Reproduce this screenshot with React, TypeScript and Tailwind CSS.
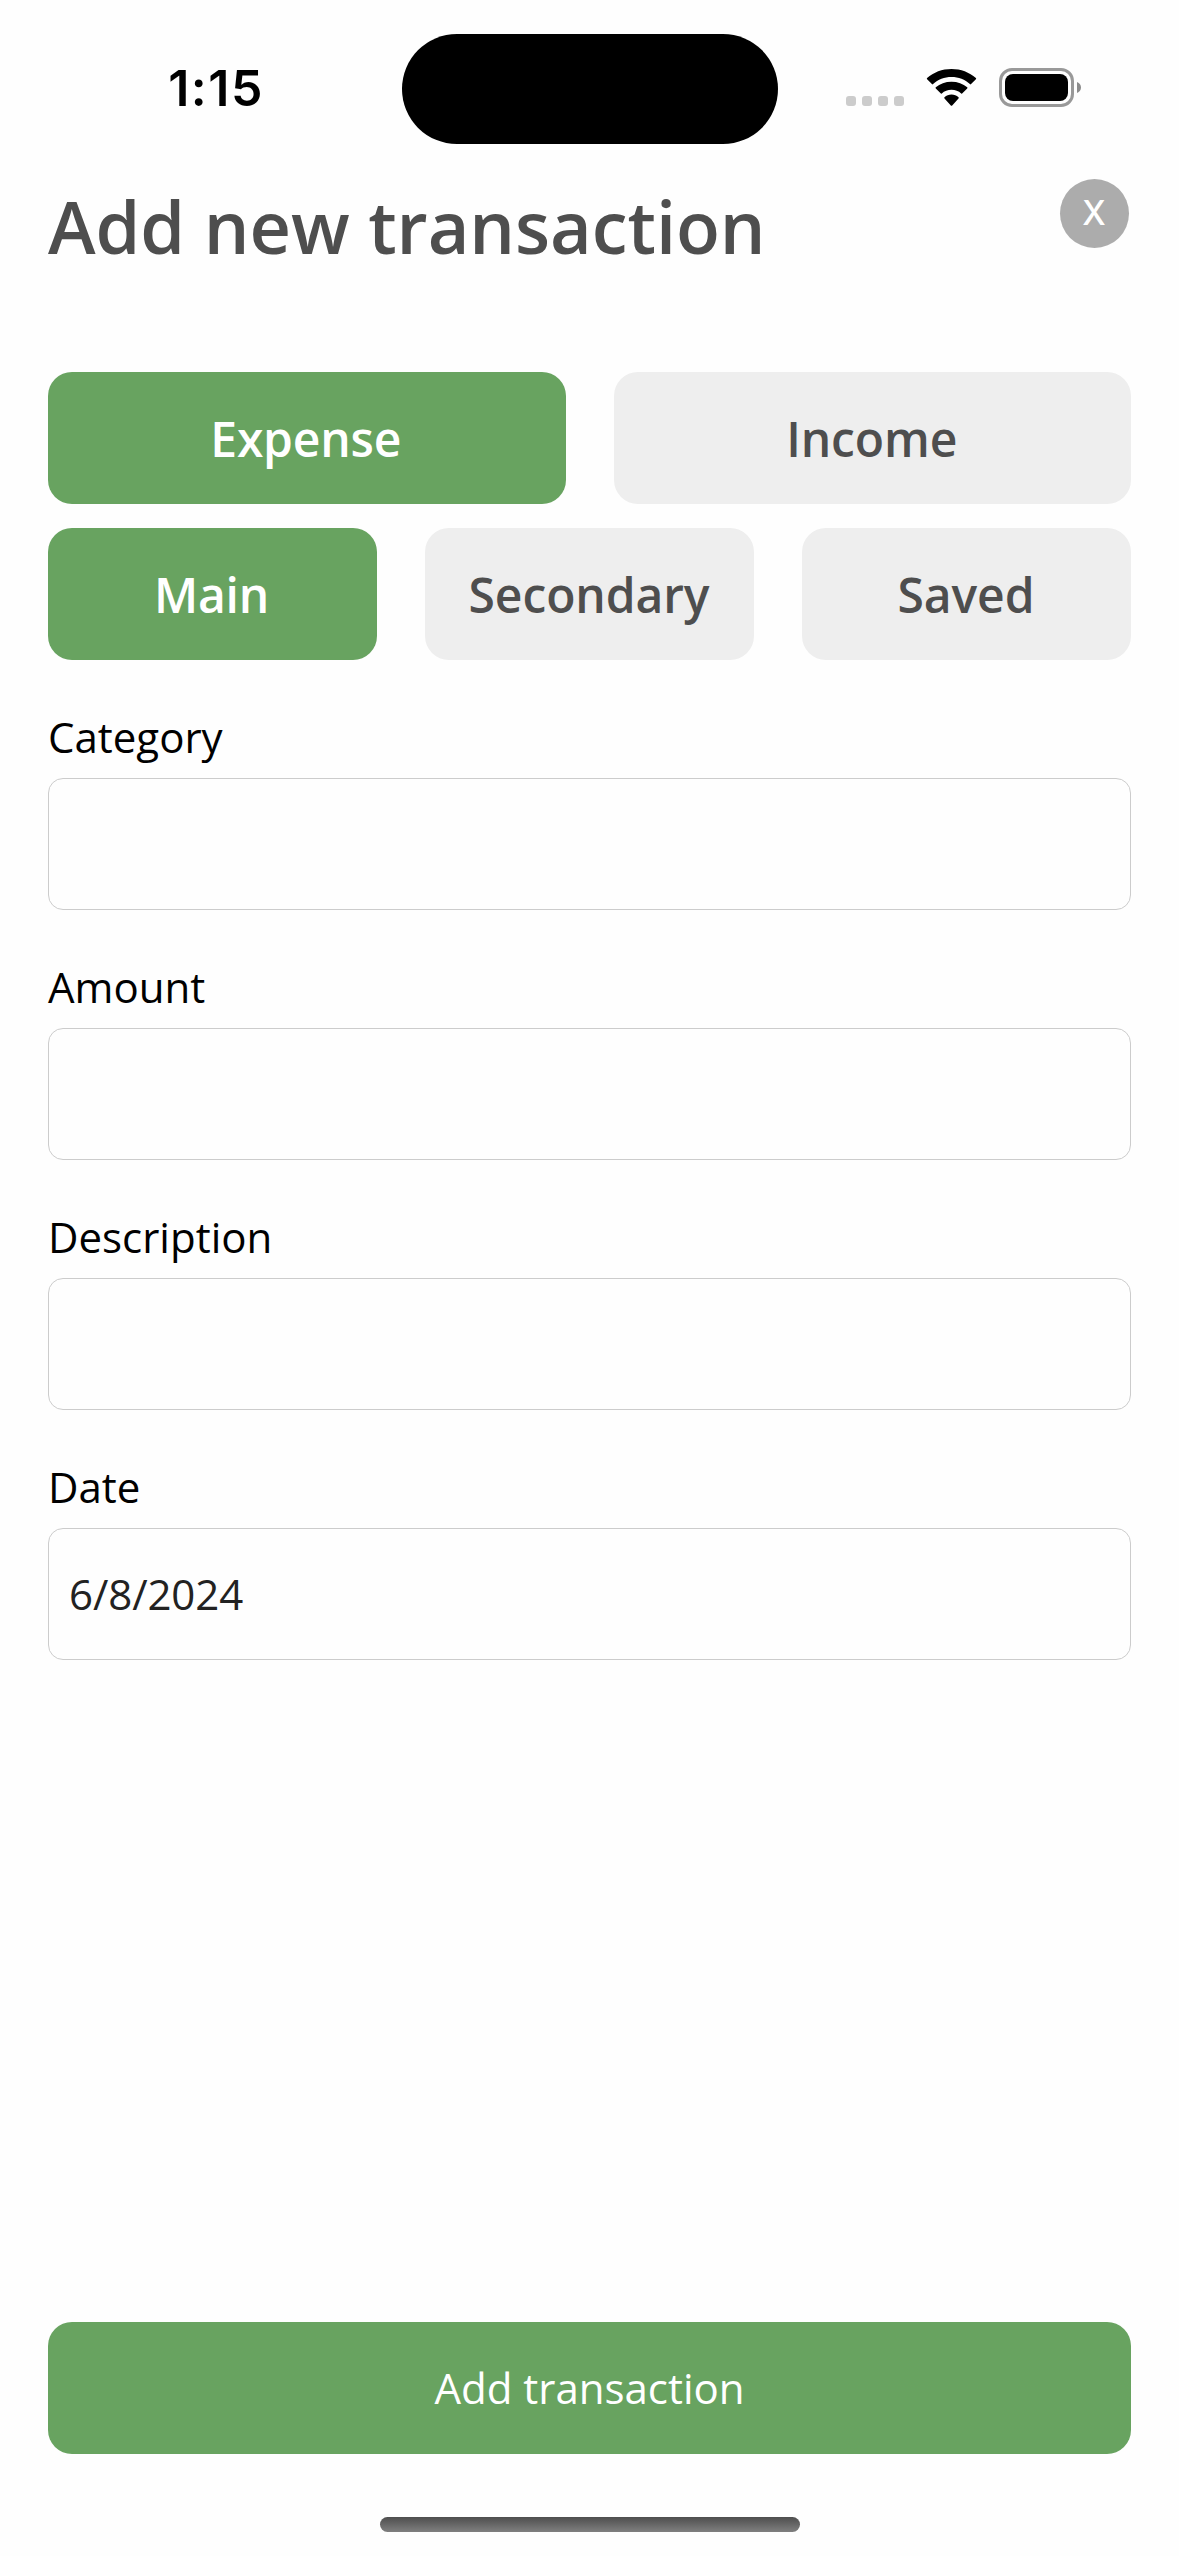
import { useState } from "react";

const kinds = ["Expense", "Income"];
const accounts = ["Main", "Secondary", "Saved"];

function StatusBar() {
  return (
    <header className="flex h-[177px] shrink-0 items-start">
      <div className="flex w-[402px] justify-center pt-[58px] pl-[30px]">
        <span className="font-['Inter',sans-serif] text-[50px] leading-[60px] font-semibold tracking-[1.5px] text-black">1:15</span>
      </div>
      <div className="mt-[33.5px] h-[110.5px] w-[375.5px] rounded-full bg-black" />
      <div className="flex items-center pt-[68px] pl-[68.5px]">
        <div className="flex gap-[6px] pt-[27px]">
          {[0, 1, 2, 3].map((dot) => (
            <span key={dot} className="size-[10px] rounded-[3px] bg-[#cccccc]" />
          ))}
        </div>
        <svg className="ml-[22px] h-[39px] w-[51px]" viewBox="0 0 51 39" fill="#000">
          <path d="M25.5 9C32.6 9 39 11.6 43.9 16.1Q44.5 16.7 45.1 16.1L49.9 11.3Q50.5 10.7 49.9 10.1C43.4 4.3 34.9 1 25.5 1S7.6 4.3 1.1 10.1Q.5 10.7 1.1 11.3L5.9 16.1Q6.5 16.7 7.1 16.1C12 11.6 18.4 9 25.5 9Z" />
          <path d="M25.5 21.8C29.2 21.8 32.6 23.2 35.2 25.4Q35.8 25.9 36.4 25.3L41.2 20.5Q41.8 19.9 41.2 19.3C37.1 15.7 31.6 13.7 25.5 13.7S13.9 15.7 9.8 19.3Q9.2 19.9 9.8 20.5L14.6 25.3Q15.2 25.9 15.8 25.4C18.4 23.2 21.8 21.8 25.5 21.8Z" />
          <path d="M32.5 29.2Q33.1 29.8 32.5 30.4L26.2 37.4Q25.5 38.2 24.8 37.4L18.5 30.4Q17.9 29.8 18.5 29.2C20.4 27.5 22.8 26.5 25.5 26.5S30.6 27.5 32.5 29.2Z" />
        </svg>
        <svg className="ml-[22px] h-[39px] w-[83px]" viewBox="0 0 83 39">
          <rect x="1.5" y="1.5" width="72" height="36" rx="11.5" fill="none" stroke="#999999" strokeWidth="3" />
          <rect x="6" y="6" width="63" height="27" rx="8" fill="#000" />
          <path d="M78 14C80.6 15 82 17 82 19.500S80.6 24 78 25Z" fill="#8c8c8c" />
        </svg>
      </div>
    </header>
  );
}

type ChoiceProps = { label: string; active: boolean; onSelect: () => void };

function Choice({ label, active, onSelect }: ChoiceProps) {
  return (
    <button
      type="button"
      onClick={onSelect}
      className={
        active
          ? "h-[132px] rounded-3xl bg-[#68a360] pt-px pr-[2px] text-5xl font-semibold tracking-[-0.2px] text-white"
          : "h-[132px] rounded-3xl bg-[#eeeeee] pt-px pr-px text-5xl font-semibold tracking-[-0.1px] text-[#4e4e4e]"
      }
    >
      {label}
    </button>
  );
}

function Field({ label, initial = "" }: { label: string; initial?: string }) {
  return (
    <label className="flex flex-col gap-3">
      <span className="h-[58px] text-[42px] leading-[58px] text-black">{label}</span>
      <input
        defaultValue={initial}
        className="h-[132px] rounded-[15px] border border-[#cccccc] bg-transparent px-5 pb-[2px] text-[42px] tracking-[-0.1px] text-[#222222] outline-none"
      />
    </label>
  );
}

export default function App() {
  const [kind, setKind] = useState("Expense");
  const [account, setAccount] = useState("Main");

  return (
    <div className="flex h-[2556px] w-[1179px] flex-col overflow-hidden bg-[#fefefe] font-['Open_Sans',sans-serif]">
      <StatusBar />
      <main className="flex flex-1 flex-col px-12">
        <div className="flex h-[195px] items-start justify-between">
          <h1 className="text-[72px] leading-[98px] font-semibold tracking-[-0.05px] text-[#4e4e4e]">Add new transaction</h1>
          <button
            type="button"
            className="mt-[1.5px] mr-[2px] flex size-[69px] items-center justify-center rounded-full bg-[#acacac] pr-px font-['Inter',sans-serif] text-[33.5px] font-medium text-white"
          >
            X
          </button>
        </div>
        <div className="grid grid-cols-2 gap-12">
          {kinds.map((k) => (
            <Choice key={k} label={k} active={k === kind} onSelect={() => setKind(k)} />
          ))}
        </div>
        <div className="mt-6 grid grid-cols-3 gap-12">
          {accounts.map((a) => (
            <Choice key={a} label={a} active={a === account} onSelect={() => setAccount(a)} />
          ))}
        </div>
        <div className="mt-12 flex flex-col gap-12">
          <Field label="Category" />
          <Field label="Amount" />
          <Field label="Description" />
          <Field label="Date" initial="6/8/2024" />
        </div>
        <button type="button" className="mt-auto h-[132px] rounded-3xl bg-[#68a360] pb-[2px] text-[42px] text-white">
          Add transaction
        </button>
      </main>
      <footer className="flex h-[102px] shrink-0 justify-center pt-[63px]">
        <div className="h-[15px] w-[420px] rounded-full bg-linear-to-b from-[#4e4e4e] to-[#808080]" />
      </footer>
    </div>
  );
}
